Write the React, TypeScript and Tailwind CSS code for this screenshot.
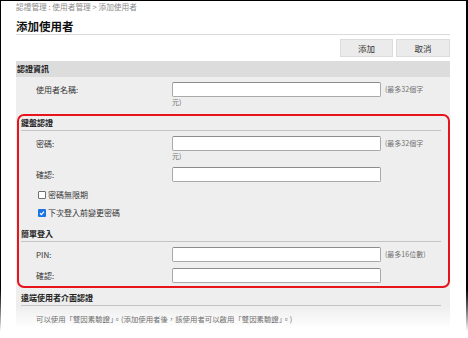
import React from 'react'

const Input = () => (
  <div className="h-[15px] w-[209px] rounded-[2px] border border-[#a9a9a9] border-t-[#8c8c8c] bg-white" />
)

const Row = ({ label, hint }: { label: string; hint?: string }) => (
  <div className="flex items-center">
    <div className="w-[136px] text-[8px] leading-[15px] text-[#333]">{label}</div>
    <Input />
    {hint && <div className="ml-[4px] text-[7px] leading-[15px] text-[#6f6f6f]">{hint}</div>}
  </div>
)

const Wrap = ({ text }: { text: string }) => (
  <div className="pl-[136px] text-[7px] leading-[10px] text-[#6f6f6f]">{text}</div>
)

const SubHeader = ({ title }: { title: string }) => (
  <div className="h-[15px] border-b border-[#c4c4c4] text-[8px] font-bold leading-[14px] text-[#222]">
    {title}
  </div>
)

const Check = ({ checked, label }: { checked?: boolean; label: string }) => (
  <div className="flex h-[12px] items-center pl-[19px]">
    {checked ? (
      <div className="flex h-[8px] w-[8px] items-center justify-center rounded-[1px] bg-[#1b74e4]">
        <svg width="6" height="6" viewBox="0 0 6 6">
          <path d="M1 3.2 L2.4 4.6 L5 1.6" stroke="white" strokeWidth="1.3" fill="none" />
        </svg>
      </div>
    ) : (
      <div className="h-[8px] w-[8px] rounded-[1px] border border-[#6e6e6e] bg-white" />
    )}
    <span className="ml-[2px] text-[8px] text-[#333]">{label}</span>
  </div>
)

export default function App() {
  return (
    <div className="flex h-[338px] w-[468px] border-t border-black bg-white font-['Noto_Sans_CJK_TC','Noto_Sans_CJK_SC',sans-serif]">
      <div className="w-[1px] bg-linear-to-b from-black from-[84%] to-white to-[98%]" />
      <div className="flex-1 pl-[15px] pr-[16px]">
        <div className="h-[12px] text-[7.7px] leading-[12px] text-[#8a8a8a]">
          認證管理 : 使用者管理 &gt; 添加使用者
        </div>
        <div className="h-[22px] border-b border-[#dadada] pt-[7px] text-[11.5px] font-bold leading-[13px] text-[#111]">
          添加使用者
        </div>
        <div className="mt-[4px] flex justify-end gap-[3px]">
          <button className="h-[18px] w-[53px] border border-[#dcdcdc] bg-[#ebebeb] text-[8.5px] text-[#333]">添加</button>
          <button className="h-[18px] w-[54px] border border-[#dcdcdc] bg-[#ebebeb] text-[8.5px] text-[#333]">取消</button>
        </div>

        <div className="mt-[4px] bg-[#eeeeee]">
          <div className="h-[16px] bg-[#dcdcdc] pl-[1px] text-[8px] font-bold leading-[16px] text-[#222]">認證資訊</div>
          <div className="pl-[20px] pt-[5px]">
            <Row label="使用者名稱:" hint="(最多32個字" />
            <Wrap text="元)" />
          </div>

          <div className="mt-[7px] ml-[1px] rounded-[7px] border-2 border-[#e8141c] pb-[3px]">
            <div className="ml-[2px] mr-[7px]">
              <SubHeader title="鍵盤認證" />
            </div>
            <div className="pl-[17px]">
              <div className="mt-[5px]">
                <Row label="密碼:" hint="(最多32個字" />
              </div>
              <Wrap text="元)" />
              <div className="mt-[6px]">
                <Row label="確認:" />
              </div>
            </div>
            <div className="mt-[7px]">
              <Check label="密碼無限期" />
            </div>
            <div className="mt-[6px]">
              <Check checked label="下次登入前變更密碼" />
            </div>
            <div className="mt-[8px] ml-[2px] mr-[7px]">
              <SubHeader title="簡單登入" />
            </div>
            <div className="pl-[17px]">
              <div className="mt-[5px]">
                <Row label="PIN:" hint="(最多16位數)" />
              </div>
              <div className="mt-[6px]">
                <Row label="確認:" />
              </div>
            </div>
          </div>

          <div className="ml-[5px] mr-[9px] pt-[3px]">
            <SubHeader title="遠端使用者介面認證" />
          </div>
        </div>
        <div className="bg-linear-to-b from-[#eeeeee] to-[#fdfdfd] pb-[1px] pl-[20px] pt-[7px] text-[7.4px] leading-[12px] text-[#6f6f6f]">
          可以使用「雙因素驗證」。(添加使用者後，該使用者可以啟用「雙因素驗證」。)
        </div>
      </div>
      <div className="w-[2px] bg-linear-to-b from-black from-[84%] to-white to-[98%]" />
    </div>
  )
}
